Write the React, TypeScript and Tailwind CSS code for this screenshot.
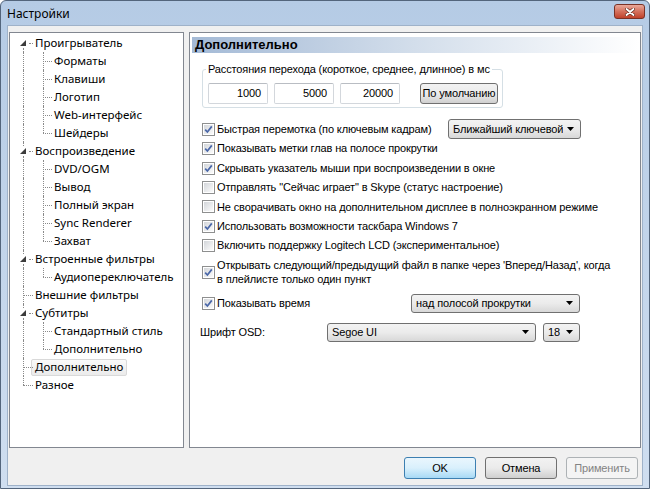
import React from "react";

type TreeItem = {
  label: string;
  level: 0 | 1;
  expander?: boolean;
  lastChild?: boolean;
  selected?: boolean;
};

const treeItems: TreeItem[] = [
  { label: "Проигрыватель", level: 0, expander: true },
  { label: "Форматы", level: 1 },
  { label: "Клавиши", level: 1 },
  { label: "Логотип", level: 1 },
  { label: "Web-интерфейс", level: 1 },
  { label: "Шейдеры", level: 1, lastChild: true },
  { label: "Воспроизведение", level: 0, expander: true },
  { label: "DVD/OGM", level: 1 },
  { label: "Вывод", level: 1 },
  { label: "Полный экран", level: 1 },
  { label: "Sync Renderer", level: 1 },
  { label: "Захват", level: 1, lastChild: true },
  { label: "Встроенные фильтры", level: 0, expander: true },
  { label: "Аудиопереключатель", level: 1, lastChild: true },
  { label: "Внешние фильтры", level: 0 },
  { label: "Субтитры", level: 0, expander: true },
  { label: "Стандартный стиль", level: 1 },
  { label: "Дополнительно", level: 1, lastChild: true },
  { label: "Дополнительно", level: 0, selected: true },
  { label: "Разное", level: 0 },
];

const options = [
  { label: "Показывать метки глав на полосе прокрутки", checked: true },
  { label: "Скрывать указатель мыши при воспроизведении в окне", checked: true },
  { label: 'Отправлять "Сейчас играет" в Skype (статус настроение)', checked: false },
  { label: "Не сворачивать окно на дополнительном дисплее в полноэкранном режиме", checked: false },
  { label: "Использовать возможности таскбара Windows 7", checked: true },
  { label: "Включить поддержку Logitech LCD (экспериментальное)", checked: false },
];

function VLine({ className }: { className: string }) {
  return <div className={`absolute w-0 border-l border-dotted border-[#8a8a8a] ${className}`} />;
}

function HLine({ className }: { className: string }) {
  return <div className={`absolute top-[9px] h-0 border-t border-dotted border-[#8a8a8a] ${className}`} />;
}

function TreeRow({ item, first, last }: { item: TreeItem; first: boolean; last: boolean }) {
  return (
    <div className="relative flex h-[18px] items-center">
      {item.level === 0 && item.expander && (
        <>
          {!first && <VLine className="left-[13px] top-0 h-[4px]" />}
          <VLine className="left-[13px] top-[14px] h-[4px]" />
          <svg className="absolute left-[10px] top-[6px]" width="6" height="6" viewBox="0 0 6 6">
            <polygon points="6,0 6,6 0,6" fill="#3c3c3c" />
          </svg>
          <HLine className="left-[19px] w-[4px]" />
        </>
      )}
      {item.level === 0 && !item.expander && (
        <>
          <VLine className={`left-[13px] top-0 ${last ? "h-[9px]" : "h-[18px]"}`} />
          <HLine className="left-[13px] w-[10px]" />
        </>
      )}
      {item.level === 1 && (
        <>
          <VLine className="left-[13px] top-0 h-[18px]" />
          <VLine className={`left-[33px] top-0 ${item.lastChild ? "h-[9px]" : "h-[18px]"}`} />
          <HLine className="left-[33px] w-[9px]" />
        </>
      )}
      {item.selected ? (
        <span className="ml-[21px] flex h-[17px] items-center rounded-[2px] border border-[#d9d9d9] bg-linear-to-b from-[#fafafa] to-[#ebebeb] px-[3px] text-black">
          {item.label}
        </span>
      ) : (
        <span className={`${item.level === 0 ? "ml-[25px]" : "ml-[44px]"} text-black`}>{item.label}</span>
      )}
    </div>
  );
}

function CheckBox({ checked }: { checked: boolean }) {
  return (
    <span className="flex h-[13px] w-[13px] shrink-0 border border-[#8e8f8f] bg-white p-[1px]">
      <span className="flex flex-1 items-center justify-center bg-linear-to-br from-[#d3d6da] to-[#fbfbfb]">
        {checked && (
          <svg width="9" height="9" viewBox="0 0 9 9">
            <path d="M1.2 4.6 L3.4 7 L7.8 1.4" fill="none" stroke="#4a67a8" strokeWidth="1.7" />
          </svg>
        )}
      </span>
    </span>
  );
}

function Arrow() {
  return (
    <svg width="7" height="4" viewBox="0 0 7 4" className="shrink-0">
      <polygon points="0,0 7,0 3.5,4" fill="#000" />
    </svg>
  );
}

function Dropdown({ label, className }: { label: string; className: string }) {
  return (
    <div
      className={`flex items-center justify-between rounded-[3px] border border-[#707070] bg-linear-to-b from-[#f3f3f3] via-[#ebebeb] to-[#d8d8d8] pl-[4px] pr-[6px] ${className}`}
    >
      <span className="truncate">{label}</span>
      <Arrow />
    </div>
  );
}

function Button({ label, kind }: { label: string; kind?: "default" | "disabled" }) {
  const tone =
    kind === "default"
      ? "border-[#3c7fb1] bg-linear-to-b from-[#eaf6fd] via-[#d9f0fc] to-[#a7d9f5] text-black"
      : kind === "disabled"
        ? "border-[#adb2b5] bg-[#f4f4f4] text-[#838383]"
        : "border-[#707070] bg-linear-to-b from-[#f2f2f2] via-[#ebebeb] to-[#cfcfcf] text-black";
  return (
    <div className={`flex h-[22px] w-[72px] items-center justify-center rounded-[3px] border ${tone}`}>{label}</div>
  );
}

function NumberBox({ value }: { value: string }) {
  return (
    <div className="flex h-[21px] w-[60px] items-center justify-end rounded-[2px] border border-[#d3d7dc] border-t-[#b9bdc3] bg-white pr-[6px]">
      {value}
    </div>
  );
}

export default function App() {
  return (
    <div className="flex h-[489px] w-[650px] flex-col rounded-t-[6px] border border-[#53657c] bg-linear-to-b from-[#b5cbe5] to-[#cfdef0] font-['Liberation_Sans',Arial,sans-serif] text-[11px] tracking-[-0.13px] text-black">
      <div className="flex h-[24px] items-start justify-between">
        <span className="ml-[6px] mt-[5px] font-['Noto_Sans',sans-serif] text-[12px] leading-[16px] tracking-normal text-black">Настройки</span>
        <div className="mr-[4px] mt-[3px] flex h-[15px] w-[31px] items-center justify-center rounded-[3px] border border-[#7a3226] bg-linear-to-b from-[#e9a99b] via-[#d4705c] to-[#c0412a]">
          <svg width="10" height="8" viewBox="0 0 10 8">
            <path d="M1.5 1 L8.5 7 M8.5 1 L1.5 7" stroke="#5a2418" strokeWidth="3.2" strokeLinecap="round" />
            <path d="M1.5 1 L8.5 7 M8.5 1 L1.5 7" stroke="#ffffff" strokeWidth="1.9" strokeLinecap="round" />
          </svg>
        </div>
      </div>

      <div className="mx-[6px] mb-[2px] flex flex-1 flex-col border border-[#9fb2c9] bg-[#f0f0f0] px-[1px] pt-[6px]">
        <div className="flex h-[416px] gap-[5px]">
          <div className="w-[175px] border border-[#828790] bg-white pt-[1px] font-['Noto_Sans',sans-serif] text-[11.5px] tracking-normal">
            {treeItems.map((item, i) => (
              <TreeRow key={i} item={item} first={i === 0} last={i === treeItems.length - 1} />
            ))}
          </div>

          <div className="flex w-[452px] flex-col border border-[#828790] bg-white">
            <div className="ml-[2px] mr-[1px] mt-[4px] flex h-[16px] items-center bg-linear-to-r from-[#a4bad6] via-[#d3deeb] to-[#ffffff] pl-[3px] text-[13px] font-bold tracking-normal">
              Дополнительно
            </div>

            <fieldset className="ml-[12px] mt-[9px] w-[301px] rounded-[3px] border border-[#d5dfe5]">
              <legend className="ml-[3px] px-[2px] leading-[14px]">Расстояния перехода (короткое, среднее, длинное) в мс</legend>
              <div className="flex items-center pb-[3px] pl-[5px] pt-[7px]">
                <NumberBox value="1000" />
                <div className="ml-[6px]">
                  <NumberBox value="5000" />
                </div>
                <div className="ml-[6px]">
                  <NumberBox value="20000" />
                </div>
                <div className="ml-[20px] flex h-[21px] w-[78px] items-center justify-center rounded-[3px] border border-[#707070] bg-linear-to-b from-[#f2f2f2] via-[#ebebeb] to-[#d0d0d0]">
                  По умолчанию
                </div>
              </div>
            </fieldset>

            <div className="ml-[12px] mt-[11px] flex h-[20px] items-center">
              <div className="flex w-[246px] items-center gap-[2px]">
                <CheckBox checked />
                <span>Быстрая перемотка (по ключевым кадрам)</span>
              </div>
              <Dropdown label="Ближайший ключевой" className="h-[20px] w-[133px]" />
            </div>

            {options.map((o) => (
              <div key={o.label} className="ml-[12px] flex h-[19.4px] items-center gap-[2px]">
                <CheckBox checked={o.checked} />
                <span className="whitespace-nowrap">{o.label}</span>
              </div>
            ))}

            <div className="ml-[12px] mt-[3px] flex items-center gap-[2px]">
              <CheckBox checked />
              <span className="leading-[14px]">
                Открывать следующий/предыдущий файл в папке через 'Вперед/Назад', когда
                <br />в плейлисте только один пункт
              </span>
            </div>

            <div className="ml-[12px] mt-[7px] flex h-[20px] items-center">
              <div className="flex w-[209px] items-center gap-[2px]">
                <CheckBox checked />
                <span>Показывать время</span>
              </div>
              <Dropdown label="над полосой прокрутки" className="h-[19px] w-[169px]" />
            </div>

            <div className="ml-[10px] mt-[9px] flex h-[20px] items-center">
              <span className="w-[127px]">Шрифт OSD:</span>
              <Dropdown label="Segoe UI" className="h-[19px] w-[209px]" />
              <Dropdown label="18" className="ml-[7px] h-[19px] w-[37px]" />
            </div>
          </div>
        </div>

        <div className="mt-[9px] flex justify-end gap-[9px] pr-[3px]">
          <Button label="OK" kind="default" />
          <Button label="Отмена" />
          <Button label="Применить" kind="disabled" />
        </div>
      </div>
    </div>
  );
}
